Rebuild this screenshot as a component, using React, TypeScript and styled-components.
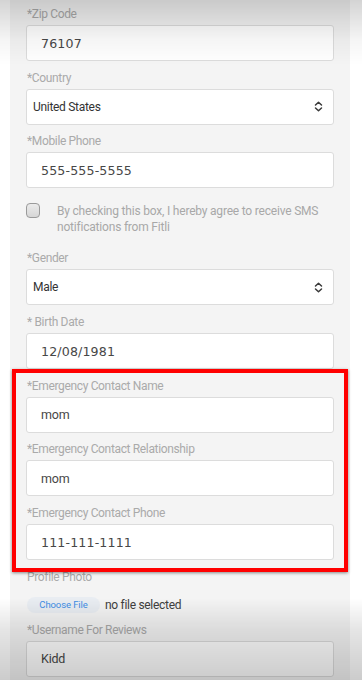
import React from "react";
import styled, { createGlobalStyle } from "styled-components";

const Global = createGlobalStyle`
  html, body { margin: 0; padding: 0; background: #ffffff; }
  body { font-family: Roboto, "Liberation Sans", sans-serif; overflow: hidden; }
  * { box-sizing: border-box; }
`;

const Page = styled.div`
  width: 362px;
  height: 680px;
  padding: 0 12px 0 10px;
  background: #ffffff;
  overflow: hidden;
`;

const Panel = styled.div`
  background: #f4f4f4;
  padding: 6px 16px 20px 16px;
  min-height: 680px;
`;

const Field = styled.div`
  display: flex;
  flex-direction: column;
  margin-bottom: 8.7px;
`;

const Label = styled.label`
  display: block;
  height: 16px;
  line-height: 16px;
  font-size: 12px;
  letter-spacing: -0.35px;
  color: #aaaaaa;
  margin: 0 0 3px 1px;
  white-space: nowrap;
`;

const InputBox = styled.div<{ $mono?: boolean }>`
  height: 36px;
  background: #ffffff;
  border: 1px solid #dcdcdc;
  border-radius: 3px;
  display: flex;
  align-items: center;
  padding-left: 14px;
  color: #474747;
  font-family: ${(p) => (p.$mono ? '"DejaVu Sans", sans-serif' : 'Roboto, "Liberation Sans", sans-serif')};
  font-size: ${(p) => (p.$mono ? "12.6px" : "12.5px")};
  letter-spacing: ${(p) => (p.$mono ? "0.15px" : "-0.2px")};
`;

const SelectBox = styled.div`
  height: 36px;
  background: #ffffff;
  border: 1px solid #dcdcdc;
  border-radius: 3px;
  display: flex;
  align-items: center;
  justify-content: space-between;
  padding: 0 10px 0 6px;
  color: #333333;
  font-size: 12px;
  letter-spacing: -0.3px;
`;

const CheckRow = styled.div`
  display: flex;
  align-items: flex-start;
  margin: 15px 0 15px 0;
`;

const CheckBox = styled.span`
  flex: 0 0 auto;
  width: 14px;
  height: 15px;
  border: 1px solid #9a9a9a;
  border-radius: 4px;
  background: linear-gradient(#ebebeb, #d6d6d6);
`;

const CheckText = styled.span`
  margin-left: 17px;
  font-size: 12px;
  line-height: 16px;
  letter-spacing: -0.2px;
  color: #a8a8a8;
`;

const Emergency = styled.div`
  position: relative;
  &::before {
    content: "";
    position: absolute;
    left: -14px;
    right: -14px;
    top: -9px;
    bottom: -12px;
    border: 4px solid #ff0000;
    box-shadow: 0 1px 3px rgba(0, 0, 0, 0.45);
    pointer-events: none;
  }
`;

const FileRow = styled.div`
  display: flex;
  align-items: center;
  margin: 12px 0 9px 1px;
`;

const FileButton = styled.span`
  display: inline-flex;
  align-items: center;
  justify-content: center;
  height: 16px;
  width: 73px;
  border-radius: 8px;
  background: #e9edf2;
  color: #3e8ee6;
  font-size: 9.5px;
  letter-spacing: -0.1px;
`;

const FileText = styled.span`
  margin-left: 5px;
  font-size: 12px;
  letter-spacing: -0.3px;
  color: #404040;
`;

const Vignette = styled.div`
  position: fixed;
  inset: 0;
  pointer-events: none;
  background: linear-gradient(
    to bottom,
    rgba(0, 0, 0, 0.17) 0px,
    rgba(0, 0, 0, 0.04) 40px,
    rgba(0, 0, 0, 0) 65px,
    rgba(0, 0, 0, 0) 598px,
    rgba(0, 0, 0, 0.1) 630px,
    rgba(0, 0, 0, 0.2) 680px
  );
`;

const Arrows = () => (
  <svg width="9" height="11" viewBox="0 0 9 11" fill="none" stroke="#3a3a3a" strokeWidth="1.5" strokeLinecap="round" strokeLinejoin="round">
    <path d="M1.5 4 L4.5 1.2 L7.5 4" />
    <path d="M1.5 7 L4.5 9.8 L7.5 7" />
  </svg>
);

const TextField = ({ label, value, mono }: { label: string; value: string; mono?: boolean }) => (
  <Field>
    <Label>{label}</Label>
    <InputBox $mono={mono}>{value}</InputBox>
  </Field>
);

const SelectField = ({ label, value }: { label: string; value: string }) => (
  <Field>
    <Label>{label}</Label>
    <SelectBox>
      <span>{value}</span>
      <Arrows />
    </SelectBox>
  </Field>
);

export default function App() {
  return (
    <>
      <Global />
      <Page>
        <Panel>
          <TextField label="*Zip Code" value="76107" mono />
          <SelectField label="*Country" value="United States" />
          <TextField label="*Mobile Phone" value="555-555-5555" mono />
          <CheckRow>
            <CheckBox />
            <CheckText>
              By checking this box, I hereby agree to receive SMS notifications from Fitli
            </CheckText>
          </CheckRow>
          <SelectField label="*Gender" value="Male" />
          <TextField label="* Birth Date" value="12/08/1981" mono />
          <Emergency>
            <TextField label="*Emergency Contact Name" value="mom" />
            <TextField label="*Emergency Contact Relationship" value="mom" />
            <TextField label="*Emergency Contact Phone" value="111-111-1111" mono />
          </Emergency>
          <Label>Profile Photo</Label>
          <FileRow>
            <FileButton>Choose File</FileButton>
            <FileText>no file selected</FileText>
          </FileRow>
          <TextField label="*Username For Reviews" value="Kidd" />
        </Panel>
      </Page>
      <Vignette />
    </>
  );
}
